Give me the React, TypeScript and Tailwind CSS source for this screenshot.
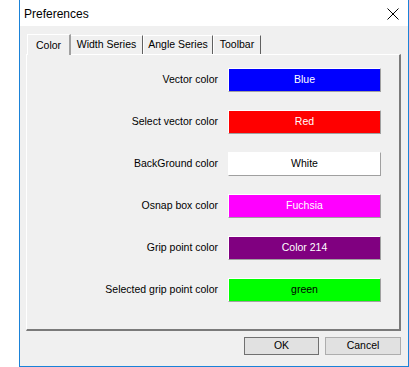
import React from "react";

const rows: { label: string; name: string; bg: string; fg: string }[] = [
  { label: "Vector color", name: "Blue", bg: "bg-[#0000ff]", fg: "text-white" },
  { label: "Select vector color", name: "Red", bg: "bg-[#ff0000]", fg: "text-white" },
  { label: "BackGround color", name: "White", bg: "bg-white", fg: "text-black" },
  { label: "Osnap box color", name: "Fuchsia", bg: "bg-[#ff00ff]", fg: "text-white" },
  { label: "Grip point color", name: "Color 214", bg: "bg-[#800080]", fg: "text-white" },
  { label: "Selected grip point color", name: "green", bg: "bg-[#00ff00]", fg: "text-black" },
];

export default function App() {
  return (
    <div
      className="w-[409px] h-[367px] bg-white flex text-[10.5px] text-black"
      style={{ fontFamily: '"Liberation Sans", Arial, sans-serif' }}
    >
      <div className="ml-[19px] w-[390px] h-[367px] border-l border-r border-b border-[#1a82d8] bg-[#f0f0f0] flex flex-col">
        <div className="h-[26px] bg-white flex items-center justify-between pl-[4px] pr-[9px]">
          <span className="text-[12px] mt-[1px]">Preferences</span>
          <svg width="12" height="12" viewBox="0 0 12 12" className="mt-[1px]">
            <path d="M0.5 0.5 L11.5 11.5 M11.5 0.5 L0.5 11.5" stroke="#000" strokeWidth="1" />
          </svg>
        </div>
        <div className="flex flex-col pl-[6px] pr-[7px] pt-[7px]">
          <div className="flex items-end h-[21px] pl-[1px] relative z-10">
            <div className="w-[44px] h-[21px] flex justify-center items-start pt-[3px] bg-[#f0f0f0] border-l border-t border-white border-r-2 border-r-[#a0a0a0] mb-[-1px] relative">
              Color
            </div>
            <div className="w-[72px] h-[19px] flex justify-center items-center border-t border-white border-r border-r-[#606060]">
              Width Series
            </div>
            <div className="w-[70px] h-[19px] flex justify-center items-center border-t border-l border-white border-r border-r-[#606060]">
              Angle Series
            </div>
            <div className="w-[48px] h-[19px] flex justify-center items-center border-t border-l border-white border-r border-r-[#606060]">
              Toolbar
            </div>
          </div>
          <div className="h-[277px] border-l border-t border-white border-r-2 border-b-2 border-r-[#7a7a7a] border-b-[#7a7a7a] flex flex-col pt-[13px] gap-[18px]">
            {rows.map((r) => (
              <div key={r.label} className="flex items-center h-[24px]">
                <div className="w-[201px] text-right pr-[10px]">{r.label}</div>
                <div
                  className={`w-[153px] h-[24px] ${r.bg} ${r.fg} flex items-center justify-center border-t border-l border-white border-r border-b border-r-[#a0a0a0] border-b-[#a0a0a0]`}
                >
                  {r.name}
                </div>
              </div>
            ))}
          </div>
          <div className="flex justify-end gap-[6px] mt-[6px]">
            <div className="w-[75px] h-[18px] bg-[#e1e1e1] border border-[#707070] flex items-center justify-center">
              OK
            </div>
            <div className="w-[76px] h-[18px] bg-[#e1e1e1] border border-[#adadad] flex items-center justify-center">
              Cancel
            </div>
          </div>
        </div>
      </div>
    </div>
  );
}
